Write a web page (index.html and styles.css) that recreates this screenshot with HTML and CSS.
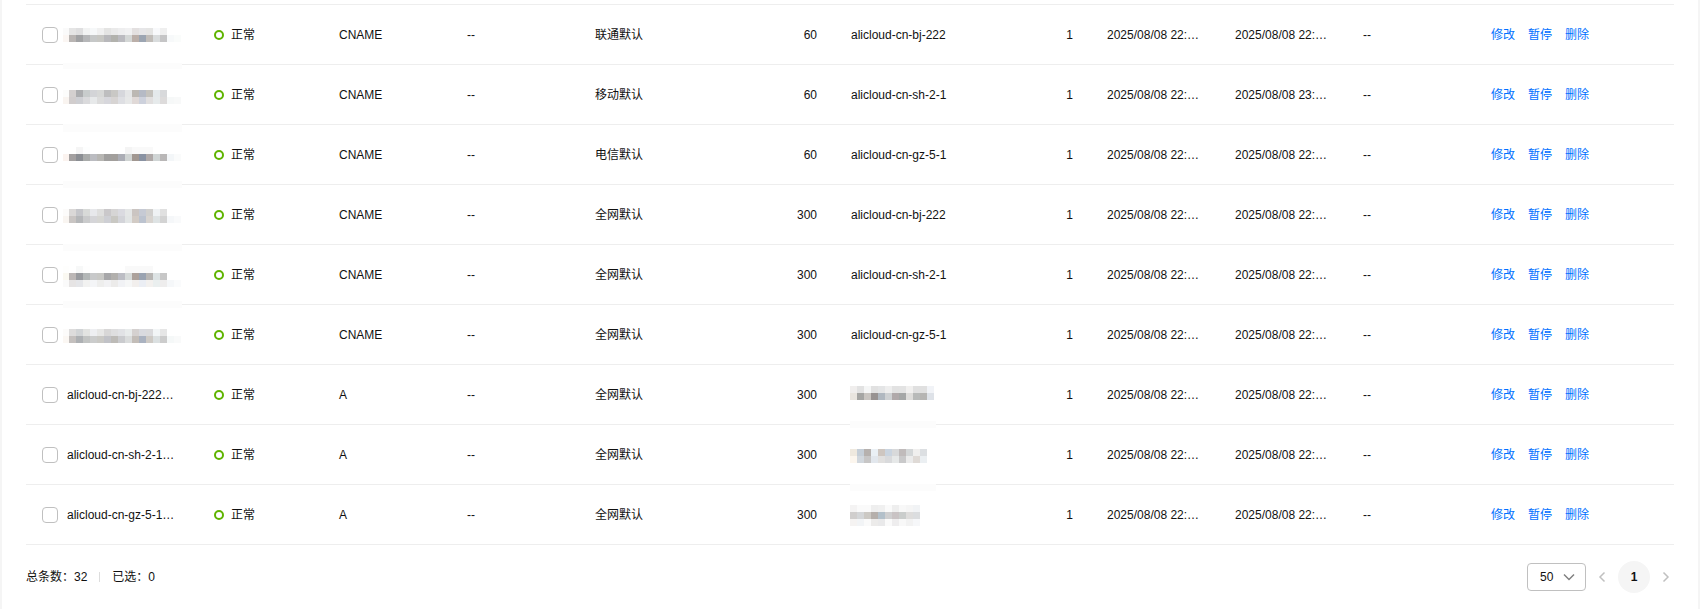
FILE: index.html
```html
<!DOCTYPE html>
<html lang="zh-CN">
<head>
    <meta charset="UTF-8">
    <meta name="viewport" content="width=device-width, initial-scale=1.0">
    <title>解析记录</title>
    <link rel="stylesheet" href="styles.css">
</head>
<body>
    <div class="container">
        <table class="records">
            <colgroup>
                <col class="col-check">
                <col span="11" class="col-data">
                <col>
            </colgroup>
            <tbody id="records-body"></tbody>
        </table>

        <div class="footer">
            <div class="summary">
                <span>总条数：32</span>
                <span class="divider"></span>
                <span>已选：0</span>
            </div>
            <div class="pagination">
                <div class="page-size">
                    <select aria-label="每页条数">
                        <option>50</option>
                    </select>
                    <svg width="12" height="8" viewBox="0 0 12 8"><path d="M1 1.5L6 6.5L11 1.5"/></svg>
                </div>
                <button class="arrow" aria-label="上一页">
                    <svg width="16" height="16" viewBox="0 0 16 16"><path d="M10.5 3.5L6 8L10.5 12.5"/></svg>
                </button>
                <button class="page">1</button>
                <button class="arrow" aria-label="下一页">
                    <svg width="16" height="16" viewBox="0 0 16 16"><path d="M5.5 3.5L10 8L5.5 12.5"/></svg>
                </button>
            </div>
        </div>
    </div>

    <script src="script.js"></script>
</body>
</html>
```
FILE: styles.css
```css
* {
    box-sizing: border-box;
}
body {
    margin: 0;
    padding: 0 2px;
    background-color: #f5f5f5;
    color: #111;
    font-family: "Liberation Sans", Arial, "Noto Sans CJK SC", sans-serif;
    font-size: 12px;
    line-height: 18px;
}
.container {
    min-height: 100vh;
    padding: 4px 24px 0;
    background-color: #fff;
}

/* Table */
.records {
    width: 100%;
    table-layout: fixed;
    border-collapse: separate;
    border-spacing: 0;
    border-top: 1px solid #eee;
}
.col-check {
    width: 41px;
}
.col-data {
    width: 128px;
}
.records td {
    position: relative;
    height: 60px;
    padding: 0 16px;
    border-bottom: 1px solid #eee;
    white-space: nowrap;
}
.records .check {
    padding-right: 0;
}
.records .name {
    padding-left: 0;
}
.records .number {
    padding-right: 18px;
    text-align: right;
}
.check input {
    display: block;
    appearance: none;
    width: 16px;
    height: 16px;
    margin: 0;
    border: 1px solid #c0c0c0;
    border-radius: 4px;
    background-color: #fff;
}
.check input:checked {
    background-color: #0070ff;
}
.status,
.actions {
    display: flex;
    align-items: center;
}
.status svg {
    margin-right: 4px;
    fill: none;
    stroke: #5fb300;
    stroke-width: 2;
}
.actions {
    gap: 13px;
}
.actions a {
    color: #0070ff;
    text-decoration: none;
}
.actions a:hover {
    text-decoration: underline;
}

/* Masked values lie over the cell and its bottom line */
.mosaic {
    position: absolute;
    top: 0;
    z-index: 1;
}
.name .mosaic {
    left: -4px;
}
.value .mosaic {
    left: 15px;
}

/* Footer */
.footer {
    display: flex;
    align-items: center;
    justify-content: space-between;
    padding: 16px 0;
}
.summary,
.pagination {
    display: flex;
    align-items: center;
}
.divider {
    width: 1px;
    height: 10px;
    margin: 0 12px;
    background-color: #ddd;
}
.pagination {
    gap: 8px;
}
.page-size {
    position: relative;
}
.page-size select {
    display: block;
    appearance: none;
    width: 59px;
    height: 28px;
    padding: 0 12px;
    border: 1px solid #c0c0c0;
    border-radius: 4px;
    background-color: #fff;
    color: inherit;
    font: inherit;
}
.page-size svg {
    position: absolute;
    top: 10px;
    right: 11px;
    fill: none;
    stroke: #808080;
    stroke-width: 1.5;
    pointer-events: none;
}
.arrow,
.page {
    padding: 0;
    border: none;
    background: none;
    font: inherit;
    cursor: pointer;
}
.arrow svg {
    display: block;
    fill: none;
    stroke: #c0c0c0;
    stroke-width: 1.5;
}
.page {
    width: 32px;
    height: 32px;
    border-radius: 50%;
    background-color: #f5f5f5;
    color: #111;
    font-weight: bold;
}
```
FILE: script.js
```js
// Masked values: rows of 7px blocks, "band" is the strip over the row line
const nameMasks = [
    { top: 23, band: [58, 6], rows: [
        'fafafa e5e5e5 dfdfe0 f2f3f3 f6f8f9 f0f0f0 e4e4e3 eaeaea eeeeef f1f1f2 e3e0e0 e6e6e8 e5e5e4 f8f9fb efefef',
        'fbf6f3 b9b5b3 a1a2a4 b6b7b9 c6c8c8 c7c7c3 b8b8bb b2b2ad bbbbc0 d4d7d6 bbafa9 9ca5b2 c1bdb9 d9dcdd c5c5c6 f7f9fa fafcfb'] },
    { top: 25, band: [59, 8], rows: [
        'fcfcfb d4d0cf acadaf c8cccc d3d4d7 d7d8d7 bebebf c9c8c5 d6d7dc e5e6e7 bcb8b3 b5bac5 c4c2bd e4e9eb d8d9db',
        'f9f4f0 d1cdcd cecfd3 dadadc e7e9ea dcdcdc d7d7dc d7d4d3 dedfe3 e7e8e8 e0d9d7 cdd1dc e1dfdf e6eaeb dddbdb f6f8f8 f8f9f9'] },
    { top: 22, band: [56, 7], rows: [
        'ffffff ffffff f5f5f5 fdfefe ffffff ffffff ffffff ffffff ffffff f4f4f4 f9f9f9 f9f9f9 f9f9f9',
        'fbf3ef a3a0a0 8b8e93 a9abaa bbbcc1 b7b6b3 a09f9e a29f9c abadb5 d0d4d3 a19791 8992a2 afa9a8 d0d5d5 b9b7b7 f3f6f8 fafbfb'] },
    { top: 24, band: [59, 7], rows: [
        'fcfbfa dad8d7 c5c6ca d8dad8 e7e8eb dededd cac8ca d6d5d5 dadae0 e4e6e6 cbc5c2 c6cad4 d1d0ce eff2f4 e0e0e0',
        'f9f5f1 c9c5c3 b5b7b9 cacbcc d5d5d8 d6d6d3 cecfd4 c9c8c3 d3d4d9 e2e5e5 d2cbc5 bcc3cf d8d4d0 dee3e4 d3d3d3 f5f7f9 f9fafb'] },
    { top: 21, band: [56, 7], rows: [
        'fefefd ffffff f7f8f8 fefefe ffffff ffffff ffffff ffffff ffffff f9f9f9 f9f9f9 f9f9f9 f9f9f9',
        'faf8f1 bcb7b6 999b9f b3b7b7 c8c9ca c8c8c5 a7a7a9 b2b0ad bcbdc4 d6dad9 aca19b 9aa3b1 b8b6b4 dde3e4 c7c7c7',
        'fafafa e6e4e4 e5e6e9 f2f2f1 f4f5f7 eeeeed f2f2f4 ecebea f1f2f5 f6f7f7 f2efed ebeef4 f3f1ef eaefef eeeded f5f7f9 fafbfc'] },
    { top: 24, rows: [
        'fcfbfa dddcdc d1d4d6 e2e3e1 eeeff2 e7e7e6 d8d7d7 dededf e1e2e5 e8ebeb d5d1d0 d9dadf dadadc f2f5f6 e6e6e6',
        'fbf7f3 c4c0be adb0b3 c2c4c3 cbcccc cac9c5 c1c2c7 bdbbb7 cacbce dadcdc c3bdb8 aab2c0 cecac5 dbe0e1 cccccc f5f8f8 f9fafa'] }
];
const valueMasks = [
    { top: 21, band: [56, 7], rows: [
        'f0eeed e2e2e2 f5f6f6 e1e1e1 e4e5e6 eeeeee e2e2e2 e3e3e3 f1f0ef e0e0e0 e0e0e0 f1f3f7',
        'e9e5df a5a5a3 c9c5c1 989392 b0b8c0 ced1d3 b0a9aa a5a7a7 dedddb b8bab9 b6b5b3 dee2e8'] },
    { top: 24, band: [59, 7], rows: [
        'efe9df c5ced7 b6b1ae eaf0f5 cec6c0 cad4df d8d9da c0bbbb d4d7d8 f0efee dcdfe2',
        'fcf6ee d1d7dd c7c6c6 e2e7ed e1e0df d9dadc e6e8e8 c9c9ca ebebeb dfdad6 ebeff2'] },
    { top: 20, rows: [
        'f4f3f3 fafafa fafafa eeeeee f0f0f0 fafafa eeeeee f8f8f8 f5f5f5 f1f3f5',
        'd0cecd d4d6d8 ccc9c4 b5afab b3c0ca cfcfd0 c9c3c4 cacdcc dedddc dbdddf',
        'f5f3f2 f2f4f6 fafafa ecebea e9e9ea fafafa eeedee f8f8f8 f2f2f2 f6f7f9'] }
];

const day = '2025/08/08 22:…';
const late = '2025/08/08 23:…';
const records = [
    { name: nameMasks[0], type: 'CNAME', line: '联通默认', ttl: 60, value: 'alicloud-cn-bj-222', updated: day },
    { name: nameMasks[1], type: 'CNAME', line: '移动默认', ttl: 60, value: 'alicloud-cn-sh-2-1', updated: late },
    { name: nameMasks[2], type: 'CNAME', line: '电信默认', ttl: 60, value: 'alicloud-cn-gz-5-1', updated: day },
    { name: nameMasks[3], type: 'CNAME', line: '全网默认', ttl: 300, value: 'alicloud-cn-bj-222', updated: day },
    { name: nameMasks[4], type: 'CNAME', line: '全网默认', ttl: 300, value: 'alicloud-cn-sh-2-1', updated: day },
    { name: nameMasks[5], type: 'CNAME', line: '全网默认', ttl: 300, value: 'alicloud-cn-gz-5-1', updated: day },
    { name: 'alicloud-cn-bj-222…', type: 'A', line: '全网默认', ttl: 300, value: valueMasks[0], updated: day },
    { name: 'alicloud-cn-sh-2-1…', type: 'A', line: '全网默认', ttl: 300, value: valueMasks[1], updated: day },
    { name: 'alicloud-cn-gz-5-1…', type: 'A', line: '全网默认', ttl: 300, value: valueMasks[2], updated: day }
];

// The first column of blocks is cut to "first" px
function drawMosaic(mask, width, first) {
    let rects = '';
    if (mask.band) {
        rects += `<rect x="0" y="${mask.band[0]}" width="${width}" height="${mask.band[1]}" fill="#fcfcfc"/>`;
    }
    mask.rows.forEach((row, r) => {
        row.split(' ').forEach((color, c) => {
            const x = c === 0 ? 0 : first + (c - 1) * 7;
            const w = c === 0 ? first : 7;
            rects += `<rect x="${x}" y="${mask.top + r * 7}" width="${w}" height="7" fill="#${color}"/>`;
        });
    });
    return `<svg class="mosaic" width="${width}" height="68" shape-rendering="crispEdges">${rects}</svg>`;
}

function cell(content, width, first) {
    return typeof content === 'string' ? content : drawMosaic(content, width, first);
}

document.getElementById('records-body').innerHTML = records.map((item, i) => `
    <tr>
        <td class="check"><input type="checkbox" id="record-${i}" aria-label="选择记录"></td>
        <td class="name">${cell(item.name, 119, 6)}</td>
        <td>
            <div class="status">
                <svg width="16" height="16" viewBox="0 0 16 16"><circle cx="8" cy="8" r="4"/></svg>
                <span>正常</span>
            </div>
        </td>
        <td>${item.type}</td>
        <td>--</td>
        <td>${item.line}</td>
        <td class="number">${item.ttl}</td>
        <td class="value">${cell(item.value, 86, 7)}</td>
        <td class="number">1</td>
        <td>${day}</td>
        <td>${item.updated}</td>
        <td>--</td>
        <td>
            <div class="actions">
                <a href="#">修改</a>
                <a href="#">暂停</a>
                <a href="#">删除</a>
            </div>
        </td>
    </tr>`).join('');
```
